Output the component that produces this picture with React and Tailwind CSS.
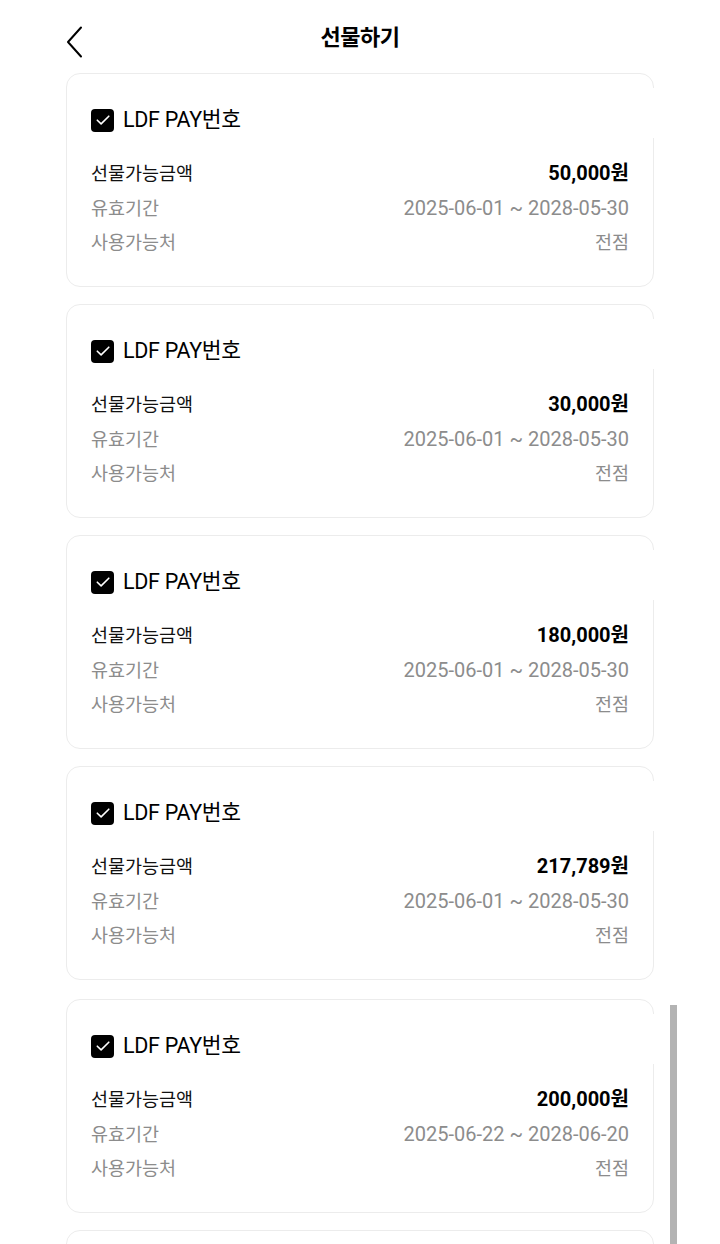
import React from 'react';

const vouchers = [
  { amount: '50,000원', period: '2025-06-01 ~ 2028-05-30', place: '전점' },
  { amount: '30,000원', period: '2025-06-01 ~ 2028-05-30', place: '전점' },
  { amount: '180,000원', period: '2025-06-01 ~ 2028-05-30', place: '전점' },
  { amount: '217,789원', period: '2025-06-01 ~ 2028-05-30', place: '전점' },
  { amount: '200,000원', period: '2025-06-22 ~ 2028-06-20', place: '전점' },
];

const font = { fontFamily: 'Roboto, "Noto Sans CJK KR", sans-serif' };

const CheckBox = () => (
  <span className="flex h-[23px] w-[23px] items-center justify-center rounded-[4px] bg-black">
    <svg width="16" height="16" viewBox="0 0 16 16" fill="none">
      <path d="M2.3 8.2l3.8 3.7L13.8 4.2" stroke="white" strokeWidth="1.6" strokeLinecap="round" strokeLinejoin="round" />
    </svg>
  </span>
);

const VoucherCard = ({ voucher }) => (
  <div className="relative rounded-[14px] border border-[#ececec] bg-white px-6 pt-[34px] pb-[25px]">
    <div className="absolute right-[-6px] top-[14px] h-[50px] w-[58px] bg-white" />
    <div className="relative flex h-6 items-center gap-[9px]">
      <CheckBox />
      <span className="text-[21.5px] tracking-[-0.3px] text-black">LDF PAY번호</span>
    </div>
    <div className="mt-[24px] flex flex-col text-[18.5px] leading-[35px]">
      <div className="flex h-[35px] items-baseline justify-between">
        <span className="text-[#111]">선물가능금액</span>
        <span className="text-[20px] font-bold text-black">{voucher.amount}</span>
      </div>
      <div className="flex h-[35px] items-baseline justify-between text-[#8c8c8c]">
        <span>유효기간</span>
        <span className="text-[20px]">{voucher.period}</span>
      </div>
      <div className="flex h-[35px] items-baseline justify-between text-[#8c8c8c]">
        <span>사용가능처</span>
        <span>{voucher.place}</span>
      </div>
    </div>
  </div>
);

export default function App() {
  return (
    <div className="relative h-[1244px] w-[720px] overflow-hidden bg-white" style={font}>
      <header className="relative z-10 flex h-[73px] items-center justify-center bg-white">
        <button className="absolute left-[62px] top-[22px] p-1">
          <svg width="18" height="32" viewBox="0 0 18 32" fill="none">
            <path d="M15 1.5L2 16l13 14.5" stroke="black" strokeWidth="2" strokeLinecap="round" strokeLinejoin="round" />
          </svg>
        </button>
        <h1 className="mb-[-2px] text-[22px] font-bold tracking-[-0.5px] text-black">선물하기</h1>
      </header>

      <div className="flex flex-col gap-[17px] px-[66px]">
        {vouchers.map((v, i) => (
          <div key={i} className={i === 4 ? 'mt-[2px]' : ''}>
            <VoucherCard voucher={v} />
          </div>
        ))}
        <div className="h-[60px] rounded-[14px] border border-[#ececec] bg-white" />
      </div>

      <div className="absolute right-[43px] top-[1005px] h-[240px] w-[7px] bg-[#b3b3b3]" />
    </div>
  );
}
